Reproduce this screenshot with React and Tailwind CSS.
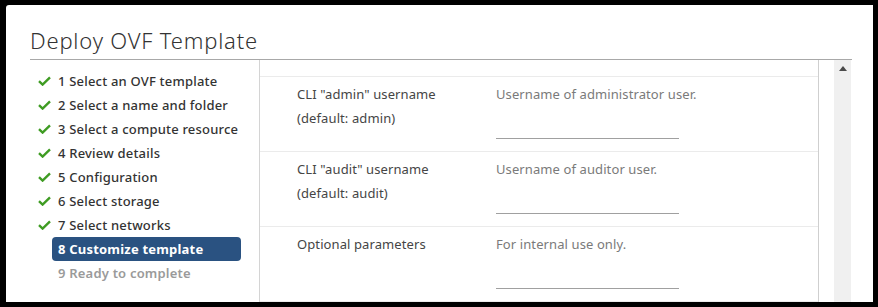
import React from "react";

const steps = [
  "1 Select an OVF template",
  "2 Select a name and folder",
  "3 Select a compute resource",
  "4 Review details",
  "5 Configuration",
  "6 Select storage",
  "7 Select networks",
];

const rows = [
  { label: ['CLI "admin" username', "(default: admin)"], desc: "Username of administrator user." },
  { label: ['CLI "audit" username', "(default: audit)"], desc: "Username of auditor user." },
  { label: ["Optional parameters"], desc: "For internal use only." },
];

function Check() {
  return (
    <svg width="13" height="10" viewBox="0 0 13 10" className="shrink-0">
      <path d="M1 5.2 L4.6 8.6 L12 1.4" fill="none" stroke="#3f9c23" strokeWidth="2.4" strokeLinejoin="miter" />
    </svg>
  );
}

export default function App() {
  return (
    <div
      className="w-[878px] h-[307px] bg-black pt-[5px] pl-[6px] pr-[5px] pb-[5px] overflow-hidden"
      style={{ fontFamily: '"Noto Sans", "Open Sans", sans-serif' }}
    >
      <div className="bg-white h-full rounded-tl-[3px] flex flex-col">
        <div className="pl-[24px] pt-[20px] h-[54px] text-[22px] leading-[30px] font-light tracking-[0.8px] text-[#333]">
          Deploy OVF Template
        </div>
        <div className="ml-[24px] mr-[21px] flex-1 border-t border-[#a8a8a8] flex min-h-0">
          <div className="w-[230px] shrink-0 border-r border-[#d4d4d4] pt-[9px] text-[13px] leading-[24px] tracking-[0.2px] text-[#333] font-medium">
            {steps.map((s) => (
              <div key={s} className="flex items-center h-[24px] pl-[8px]">
                <Check />
                <span className="ml-[7px]">{s}</span>
              </div>
            ))}
            <div className="ml-[22px] w-[189px] h-[24px] rounded-[4px] bg-[#2a5281] text-white font-bold pl-[6px]">
              8 Customize template
            </div>
            <div className="pl-[28px] h-[24px] text-[#9a9a9a] font-semibold">9 Ready to complete</div>
          </div>
          <div className="w-[559px] shrink-0 border-r border-[#cfcfcf] text-[13px] leading-[24px] tracking-[0.1px]">
            <div className="h-[17px] border-b border-[#ebebeb]" />
            {rows.map((r, i) => (
              <div key={i} className="h-[75px] border-b border-[#ebebeb] flex pt-[5px]">
                <div className="w-[236px] pl-[37px] text-[#454545]">
                  {r.label.map((l) => (
                    <div key={l}>{l}</div>
                  ))}
                </div>
                <div className="w-[183px]">
                  <div className="text-[#7a7a7a] whitespace-nowrap">{r.desc}</div>
                  <div className="h-[33px] border-b border-[#a0a0a0]" />
                </div>
              </div>
            ))}
          </div>
          <div className="w-[15px] shrink-0" />
          <div className="w-[17px] shrink-0 bg-[#f0f0f0] flex justify-center pt-[6px]">
            <svg width="8" height="5" viewBox="0 0 8 5">
              <path d="M0 5 L4 0 L8 5 Z" fill="#4a4a4a" />
            </svg>
          </div>
        </div>
      </div>
    </div>
  );
}
